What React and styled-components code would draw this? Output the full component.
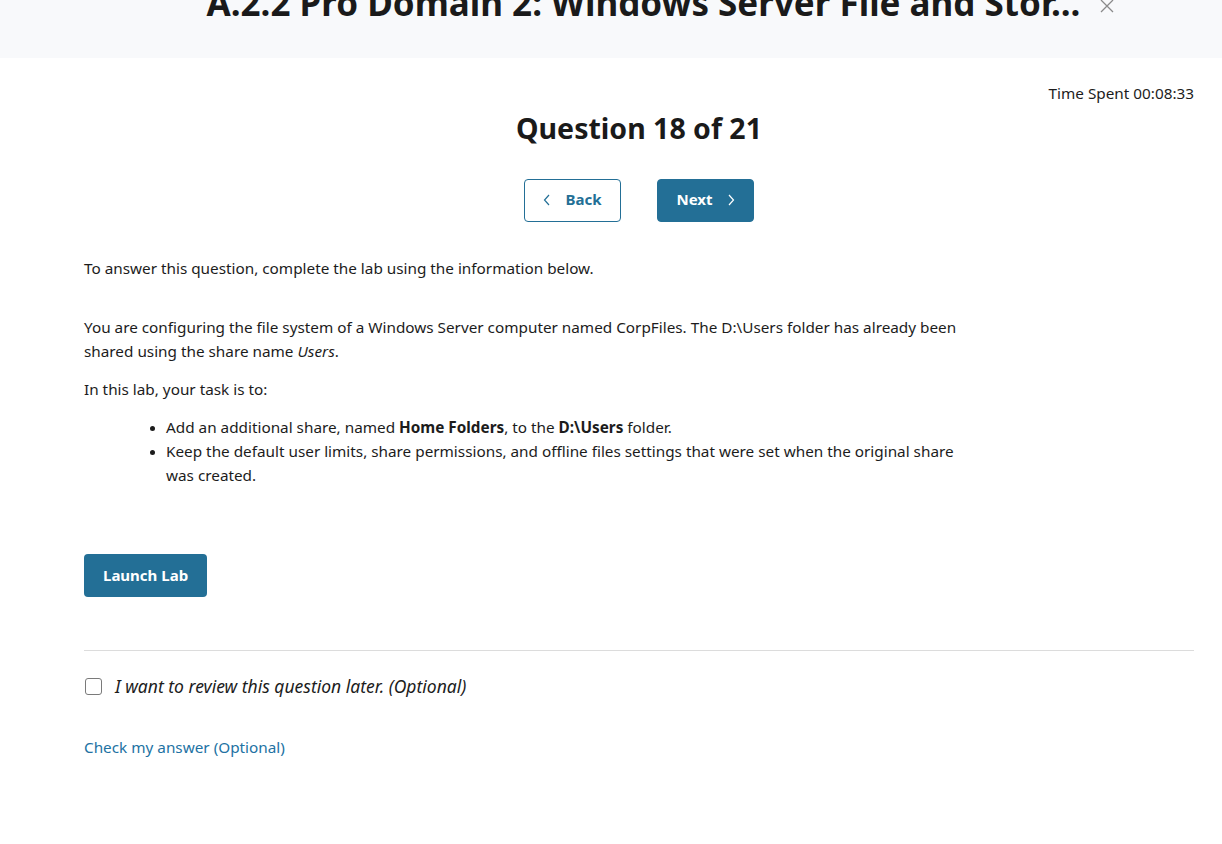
import React, { useState } from "react";
import styled, { createGlobalStyle } from "styled-components";

const GlobalStyle = createGlobalStyle`
  body {
    margin: 0;
    background: #ffffff;
    font-family: "Noto Sans", "Open Sans", sans-serif;
    color: #1c1c1c;
  }
`;

const ChevronLeft = () => (
  <svg width="8" height="12" viewBox="0 0 8 12" fill="none">
    <path d="M6 1L1.5 6 6 11" stroke="currentColor" strokeWidth="1.2" />
  </svg>
);

const ChevronRight = () => (
  <svg width="8" height="12" viewBox="0 0 8 12" fill="none">
    <path d="M2 1l4.5 5L2 11" stroke="currentColor" strokeWidth="1.2" />
  </svg>
);

const App = () => {
  const [review, setReview] = useState(false);

  return (
    <>
      <GlobalStyle />
      <Header>
        <HeaderTitle>A.2.2 Pro Domain 2: Windows Server File and Stor...</HeaderTitle>
        <CloseButton aria-label="Close">
          <svg width="16" height="16" viewBox="0 0 16 16" fill="none">
            <path d="M2 2l12 12M14 2L2 14" stroke="currentColor" strokeWidth="1.3" />
          </svg>
        </CloseButton>
      </Header>
      <Main>
        <TimeSpent>Time Spent 00:08:33</TimeSpent>
        <QuestionTitle>Question 18 of 21</QuestionTitle>
        <NavRow>
          <NavButton>
            <ChevronLeft />
            Back
          </NavButton>
          <NavButton primary>
            Next
            <ChevronRight />
          </NavButton>
        </NavRow>
        <Content>
          <Intro>To answer this question, complete the lab using the information below.</Intro>
          <Paragraph>
            You are configuring the file system of a Windows Server computer named CorpFiles. The
            D:\Users folder has already been shared using the share name <em>Users</em>.
          </Paragraph>
          <Paragraph>In this lab, your task is to:</Paragraph>
          <TaskList>
            <li>
              Add an additional share, named <strong>Home Folders</strong>, to the{" "}
              <strong>D:\Users</strong> folder.
            </li>
            <li>
              Keep the default user limits, share permissions, and offline files settings that were
              set when the original share was created.
            </li>
          </TaskList>
        </Content>
        <LaunchButton>Launch Lab</LaunchButton>
        <Divider />
        <ReviewRow>
          <Checkbox
            type="checkbox"
            checked={review}
            onChange={(e) => setReview(e.target.checked)}
          />
          I want to review this question later. (Optional)
        </ReviewRow>
        <CheckLink href="#">Check my answer (Optional)</CheckLink>
      </Main>
    </>
  );
};

export default App;

const Header = styled.header`
  height: 58px;
  background: #f8f9fb;
  display: flex;
  justify-content: center;
  align-items: flex-start;
  gap: 19px;
  overflow: hidden;
  padding-left: 100px;
`;
const HeaderTitle = styled.h1`
  margin: -21px 0 0;
  font-size: 35px;
  font-weight: 700;
  line-height: 48px;
  color: #1a1a1a;
  white-space: nowrap;
`;
const CloseButton = styled.button`
  border: none;
  background: none;
  padding: 0;
  margin-top: -2px;
  color: #8a8a8a;
  display: flex;
`;
const Main = styled.main`
  padding: 24px 28px 60px 84px;
  display: flex;
  flex-direction: column;
`;
const TimeSpent = styled.div`
  align-self: flex-end;
  font-size: 15.3px;
  line-height: 22px;
`;
const QuestionTitle = styled.h2`
  margin: 7px 0 0;
  text-align: center;
  font-size: 28.5px;
  font-weight: 700;
  line-height: 34px;
  color: #1a1a1a;
`;
const NavRow = styled.div`
  display: flex;
  justify-content: center;
  gap: 36px;
  margin-top: 34px;
`;
const NavButton = styled.button`
  height: 43px;
  min-width: 97px;
  padding: 0 18px 3px;
  display: flex;
  align-items: center;
  justify-content: center;
  gap: 14px;
  border-radius: 4px;
  font-family: inherit;
  font-size: 15px;
  font-weight: 700;
  border: 1px solid #236f96;
  background: ${(p) => (p.primary ? "#236f96" : "#ffffff")};
  color: ${(p) => (p.primary ? "#ffffff" : "#236f96")};
  svg {
    margin-top: 2px;
  }
`;
const Content = styled.div`
  max-width: 880px;
  font-size: 15.3px;
  line-height: 24px;
  margin-top: 34px;
`;
const Intro = styled.p`
  margin: 0 0 35px;
`;
const Paragraph = styled.p`
  margin: 0 0 14px;
`;
const TaskList = styled.ul`
  margin: 1px 0 0;
  padding-left: 82px;
  li::marker {
    font-size: 13px;
  }
`;
const LaunchButton = styled.button`
  align-self: flex-start;
  margin-top: 67px;
  height: 43px;
  padding: 0 19px 2px;
  border: none;
  border-radius: 4px;
  background: #236f96;
  color: #ffffff;
  font-family: inherit;
  font-size: 15px;
  font-weight: 700;
`;
const Divider = styled.hr`
  width: 100%;
  margin: 53px 0 0;
  border: none;
  border-top: 1px solid #dcdcdc;
`;
const ReviewRow = styled.label`
  display: flex;
  align-items: center;
  gap: 13px;
  margin-top: 23px;
  font-size: 17.5px;
  font-style: italic;
`;
const Checkbox = styled.input`
  appearance: none;
  width: 17px;
  height: 17px;
  margin: 0 0 0 1px;
  border: 1px solid #7a7a7a;
  border-radius: 3px;
  background: #fff;
`;
const CheckLink = styled.a`
  margin-top: 39px;
  align-self: flex-start;
  font-size: 15.3px;
  color: #2272a3;
  text-decoration: none;
`;
